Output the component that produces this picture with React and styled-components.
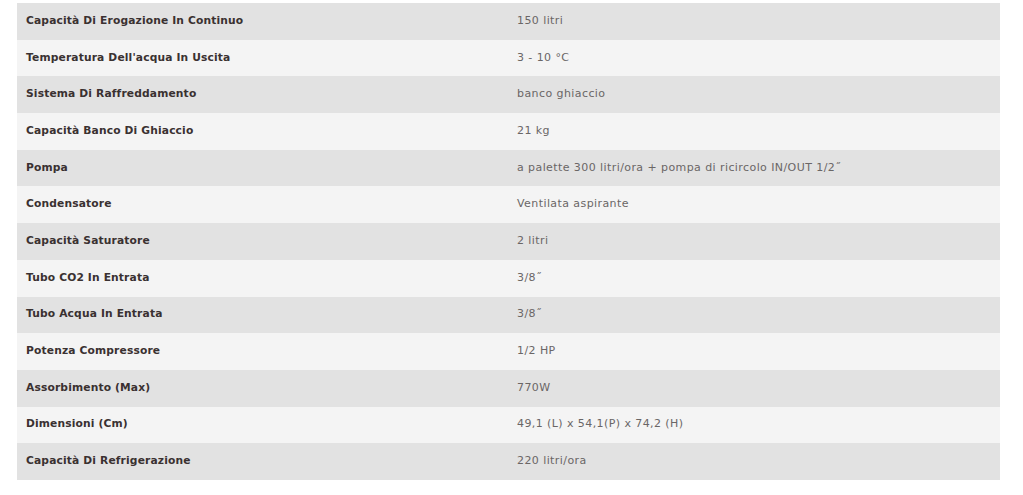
import React from "react";
import styled, { createGlobalStyle } from "styled-components";

const specs = [
  ["Capacità Di Erogazione In Continuo", "150 litri"],
  ["Temperatura Dell'acqua In Uscita", "3 - 10 °C"],
  ["Sistema Di Raffreddamento", "banco ghiaccio"],
  ["Capacità Banco Di Ghiaccio", "21 kg"],
  ["Pompa", "a palette 300 litri/ora + pompa di ricircolo IN/OUT 1/2\u02DD"],
  ["Condensatore", "Ventilata aspirante"],
  ["Capacità Saturatore", "2 litri"],
  ["Tubo CO2 In Entrata", "3/8\u02DD"],
  ["Tubo Acqua In Entrata", "3/8\u02DD"],
  ["Potenza Compressore", "1/2 HP"],
  ["Assorbimento (Max)", "770W"],
  ["Dimensioni (Cm)", "49,1 (L) x 54,1(P) x 74,2 (H)"],
  ["Capacità Di Refrigerazione", "220 litri/ora"],
];

const GlobalStyle = createGlobalStyle`
  body {
    margin: 0;
    background: #ffffff;
    font-family: "DejaVu Sans", "Open Sans", sans-serif;
  }
`;

const Page = styled.div`
  padding: 3px 23px 0 17px;
`;

const Table = styled.div`
  display: grid;
  grid-template-columns: 1fr 1fr;
`;

const Row = styled.div`
  display: contents;
`;

const Cell = styled.div`
  height: 36.7px;
  box-sizing: border-box;
  padding: 0 9px 2px;
  display: flex;
  align-items: center;
  background: ${(props) => (props.$odd ? "#e2e2e2" : "#f4f4f4")};
`;

const Label = styled(Cell)`
  font-size: 10.7px;
  font-weight: 700;
  color: #3a3131;
  letter-spacing: 0.15px;
`;

const Value = styled(Cell)`
  padding-left: 8.5px;
  font-size: 11px;
  font-weight: 400;
  color: #6a6666;
  letter-spacing: 0.42px;
`;

const App = () => {
  return (
    <>
      <GlobalStyle />
      <Page>
        <Table>
          {specs.map(([label, value], i) => (
            <Row key={label}>
              <Label $odd={i % 2 === 0}>{label}</Label>
              <Value $odd={i % 2 === 0}>{value}</Value>
            </Row>
          ))}
        </Table>
      </Page>
    </>
  );
};

export default App;
